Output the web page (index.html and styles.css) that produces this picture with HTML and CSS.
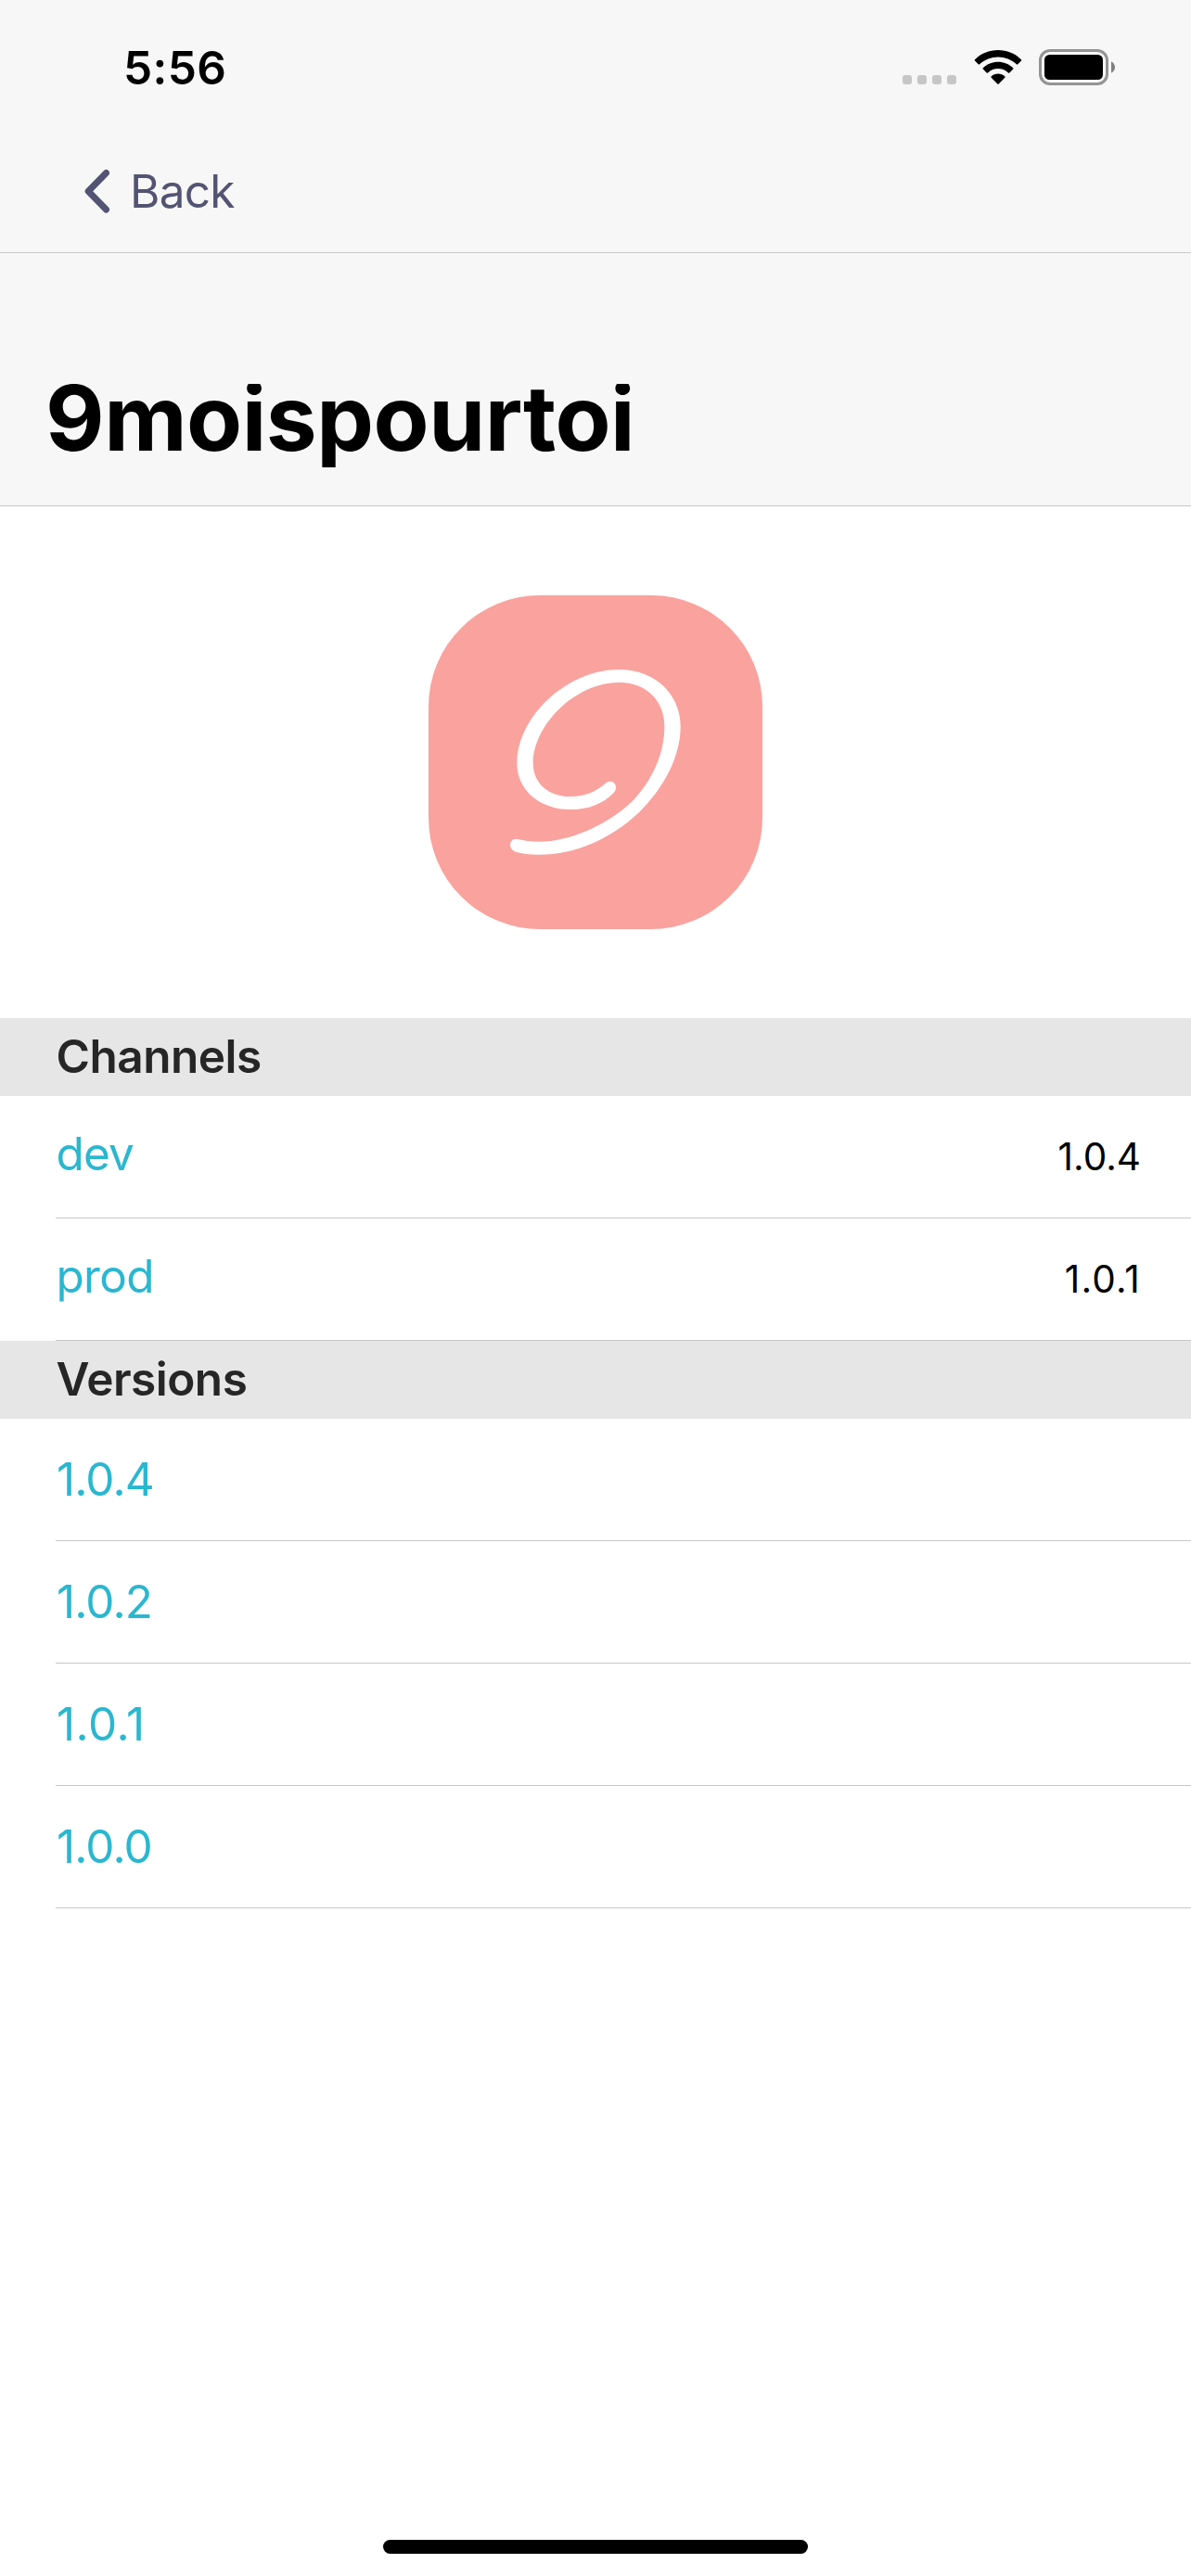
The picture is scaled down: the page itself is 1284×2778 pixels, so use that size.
FILE: index.html
```html
<!DOCTYPE html>
<html lang="en">
<head>
<meta charset="utf-8">
<title>9moispourtoi</title>
<link rel="stylesheet" href="styles.css">
</head>
<body>
<div class="screen">
  <header class="top">
    <div class="status">
      <time class="clock">5:56</time>
      <div class="indicators">
        <div class="cellular"><i></i><i></i><i></i><i></i></div>
        <svg class="wifi" width="50" height="37" viewBox="0 0 50 37" aria-hidden="true">
          <path d="M25 0C34.500 0 43.500 3.700 50 10.200Q50.600 11 50 11.600L46.300 15.300Q45.600 16 44.900 15.300C39.500 10.200 32.500 7.400 25 7.400S10.500 10.200 5.100 15.300Q4.400 16 3.700 15.300L0 11.600Q-.6 11 0 10.200C6.500 3.700 15.500 0 25 0Z"/>
          <path d="M25 12.800C31.100 12.800 36.800 15.100 41.200 19.200Q41.800 19.900 41.200 20.600L37.300 24.400Q36.700 25 36 24.400C32.900 21.600 29.100 20.100 25 20.100S17.100 21.600 14 24.400Q13.300 25 12.700 24.400L8.800 20.600Q8.200 19.900 8.800 19.200C13.200 15.100 18.900 12.800 25 12.800Z"/>
          <path d="M25 25.500C27.700 25.500 30.200 26.500 32.200 28.200Q33 29 32.300 29.800L25.700 36.400Q25 37 24.300 36.400L17.700 29.800Q17 29 17.800 28.200C19.800 26.500 22.300 25.500 25 25.500Z"/>
        </svg>
        <svg class="battery" width="82" height="39" viewBox="0 0 82 39" aria-hidden="true">
          <rect x="1.500" y="1.500" width="72" height="36" rx="10.500" fill="none" stroke="#949494" stroke-width="3"/>
          <rect x="6" y="6" width="63" height="27" rx="5.500"/>
          <path d="M78 13.300Q82 15.500 82 19.500T78 25.700Z" fill="#808080"/>
        </svg>
      </div>
    </div>
    <nav class="nav">
      <a class="back">
        <svg width="28" height="48" viewBox="0 0 28 48" aria-hidden="true"><path d="M24.500 4.500L5.200 24.300L24.500 44"/></svg>
        <span>Back</span>
      </a>
    </nav>
    <div class="heading"><h1>9moispourtoi</h1></div>
  </header>
  <main>
    <div class="hero">
      <div class="app-icon">
        <svg width="360" height="360" viewBox="66 66 1080 1080" aria-hidden="true">
          <path d="M351 854Q385 863 423 863C520 863 640 812 722 735C790 668 829 575 829 492C829 405 770 348 682 348C540 348 404 487 404 608C404 672 451 717 527 717C569 717 607 703 637 675C643 669 650 668 655 668C672 668 678 691 665 705C632 740 583 759 527 759C425 759 352 696 352 608C352 458 515 306 682 306C797 306 881 384 881 492C881 585 828 690 745 770C655 854 540 905 423 905Q380 905 348 896C322 888 326 852 351 854Z"/>
        </svg>
      </div>
    </div>
    <section>
      <h2 class="section-title">Channels</h2>
      <ul class="list channels">
        <li><a>dev</a><span class="version">1.0.4</span></li>
        <li><a class="wide">prod</a><span class="version ends-one">1.0.1</span></li>
      </ul>
    </section>
    <section>
      <h2 class="section-title">Versions</h2>
      <ul class="list">
        <li><a>1.0.4</a></li>
        <li><a>1.0.2</a></li>
        <li><a class="ends-one">1.0.1</a></li>
        <li><a>1.0.0</a></li>
      </ul>
    </section>
  </main>
  <footer class="home"><div class="home-bar"></div></footer>
</div>
</body>
</html>
```
FILE: styles.css
```css
* { box-sizing: border-box; margin: 0; padding: 0; }

body {
  background: #fff;
  color: #000;
  font: 400 49.5px/60px Inter, "Liberation Sans", sans-serif;
}

.screen {
  display: flex;
  flex-direction: column;
  width: 1284px;
  height: 2778px;
  overflow: hidden;
}

.top { background: #f7f7f7; }

.status {
  display: flex;
  justify-content: space-between;
  height: 141px;
  padding: 43px 82px 0 133px;
}

.clock { font-weight: 600; letter-spacing: .4px; }

.indicators { display: flex; align-items: flex-start; padding-top: 10px; }
.cellular { display: flex; gap: 6px; margin: 28px 20px 0 0; }
.cellular i { width: 10px; height: 10px; border-radius: 3px; background: #c6c6c6; }
.wifi { margin: 1px 19px 0 0; overflow: visible; }
.battery { overflow: visible; }

.nav {
  display: flex;
  align-items: center;
  height: 132px;
  padding: 0 0 1px 90px;
  border-bottom: 1px solid #c6c6c8;
}

.back {
  display: flex;
  align-items: center;
  gap: 22px;
  color: #535373;
  letter-spacing: -.7px;
}

.back svg {
  fill: none;
  stroke: currentColor;
  stroke-width: 7;
  stroke-linecap: round;
  stroke-linejoin: round;
}

.heading {
  height: 273px;
  padding: 141px 49px 0;
  border-bottom: 1px solid #c6c6c8;
}

h1 {
  height: 90px;
  overflow: hidden;
  font-size: 98px;
  font-weight: 700;
  line-height: 73px;
  letter-spacing: -.48px;
}

.hero { display: flex; justify-content: center; padding: 96px 0; }

.app-icon {
  width: 360px;
  height: 360px;
  border-radius: 120px;
  background: #faa29e;
}

.app-icon svg { display: block; fill: #fff; }

.section-title {
  height: 84px;
  padding: 11px 60.5px 0;
  background: #e6e6e6;
  color: #262626;
  font-size: 49.5px;
  font-weight: 600;
  letter-spacing: -.5px;
}

.list { list-style: none; padding-left: 60px; }

.list li {
  display: flex;
  align-items: center;
  justify-content: space-between;
  height: 132px;
  padding-right: 54px;
  border-bottom: 1px solid #c6c6c8;
}

.list a { padding: 0 0 1px 1px; color: #2ab7d0; letter-spacing: -.9px; }
.list .wide { letter-spacing: -.7px; }
.list .ends-one { letter-spacing: .48px; }
.channels a { padding: 0 0 7px .5px; }

.list .version { font-size: 40.5px; }
.list .version.ends-one { letter-spacing: 1.2px; }

.home {
  display: flex;
  justify-content: center;
  margin-top: auto;
  padding-bottom: 24px;
}

.home-bar { width: 458px; height: 15px; border-radius: 8px; background: #000; }
```
